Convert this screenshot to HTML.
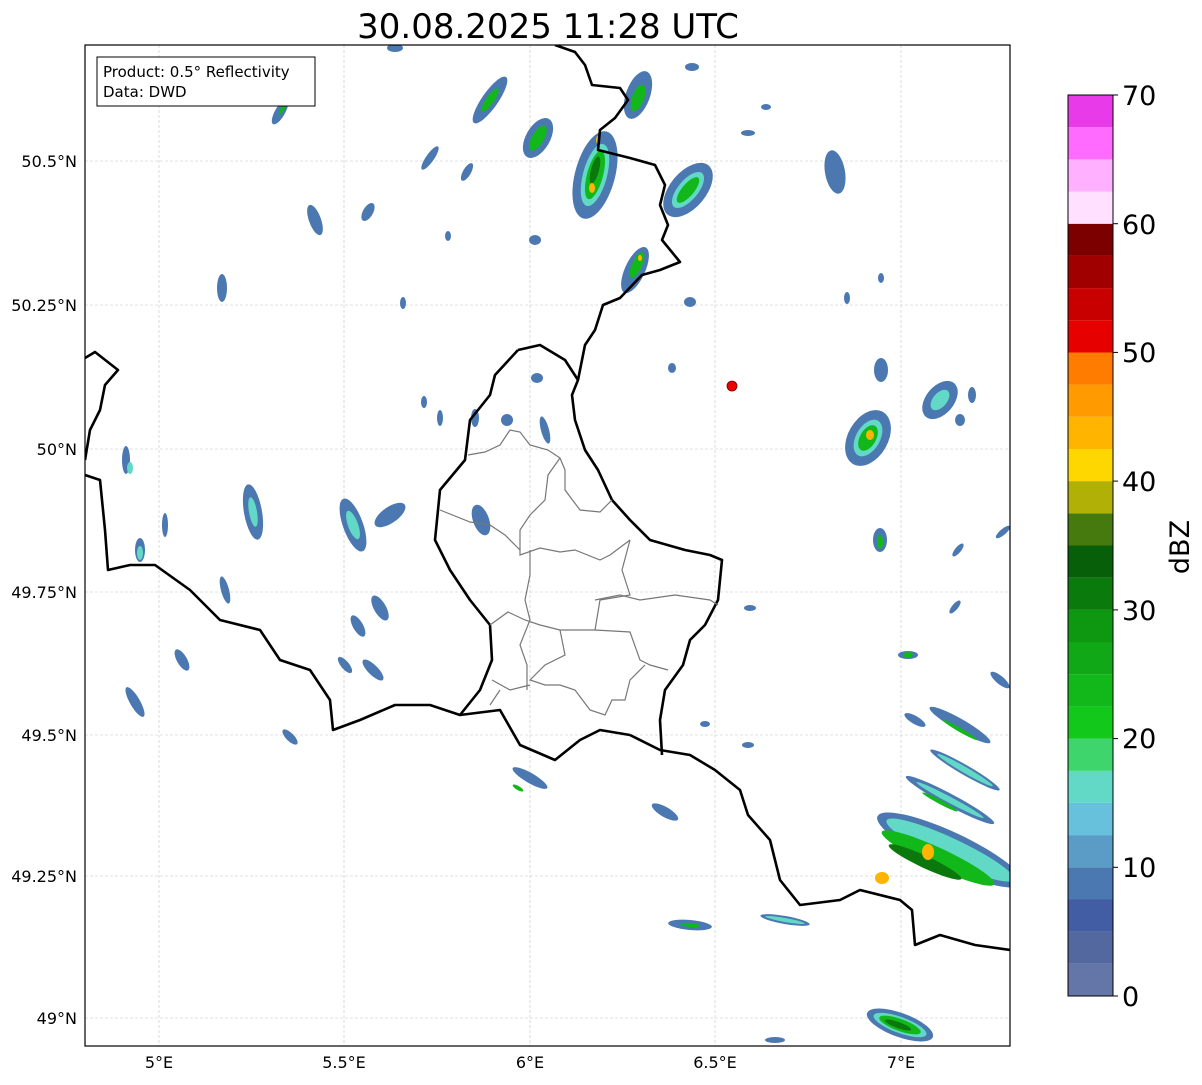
<!DOCTYPE html>
<html><head><meta charset="utf-8"><style>
body{margin:0;background:#fff;width:1202px;height:1081px;overflow:hidden;font-family:"DejaVu Sans","Liberation Sans",sans-serif}
</style></head><body>
<svg width="1202" height="1081" xmlns="http://www.w3.org/2000/svg" font-family="DejaVu Sans, Liberation Sans, sans-serif">
<text x="548" y="38" font-size="34" text-anchor="middle">30.08.2025 11:28 UTC</text>
<defs><clipPath id="c"><rect x="85" y="45" width="925" height="1001"/></clipPath></defs>
<g stroke="#c4c4c4" stroke-width="0.6" stroke-dasharray="3,2">
<line x1="159" y1="45" x2="159" y2="1046"/><line x1="344" y1="45" x2="344" y2="1046"/><line x1="530" y1="45" x2="530" y2="1046"/><line x1="715" y1="45" x2="715" y2="1046"/><line x1="901" y1="45" x2="901" y2="1046"/>
<line x1="85" y1="161" x2="1010" y2="161"/><line x1="85" y1="305" x2="1010" y2="305"/><line x1="85" y1="449" x2="1010" y2="449"/><line x1="85" y1="592" x2="1010" y2="592"/><line x1="85" y1="735" x2="1010" y2="735"/><line x1="85" y1="876" x2="1010" y2="876"/><line x1="85" y1="1018" x2="1010" y2="1018"/>
</g>
<g clip-path="url(#c)">
<g id="blobs">
<g fill="#4b78b1">
<ellipse cx="490" cy="100" rx="8" ry="28" transform="rotate(35 490 100)"/>
<ellipse cx="538" cy="138" rx="12" ry="22" transform="rotate(30 538 138)"/>
<ellipse cx="595" cy="175" rx="20" ry="45" transform="rotate(15 595 175)"/>
<ellipse cx="638" cy="95" rx="12" ry="25" transform="rotate(20 638 95)"/>
<ellipse cx="688" cy="190" rx="18" ry="32" transform="rotate(40 688 190)"/>
<ellipse cx="635" cy="270" rx="10" ry="25" transform="rotate(25 635 270)"/>
<ellipse cx="430" cy="158" rx="4" ry="14" transform="rotate(35 430 158)"/>
<ellipse cx="467" cy="172" rx="4" ry="10" transform="rotate(30 467 172)"/>
<ellipse cx="315" cy="220" rx="6" ry="16" transform="rotate(-20 315 220)"/>
<ellipse cx="368" cy="212" rx="5" ry="10" transform="rotate(30 368 212)"/>
<ellipse cx="222" cy="288" rx="5" ry="14"/>
<ellipse cx="280" cy="112" rx="5" ry="14" transform="rotate(30 280 112)"/>
<ellipse cx="692" cy="67" rx="7" ry="4"/>
<ellipse cx="835" cy="172" rx="10" ry="22" transform="rotate(-10 835 172)"/>
<ellipse cx="868" cy="438" rx="20" ry="30" transform="rotate(30 868 438)"/>
<ellipse cx="940" cy="400" rx="14" ry="22" transform="rotate(40 940 400)"/>
<ellipse cx="881" cy="370" rx="7" ry="12"/>
<ellipse cx="880" cy="540" rx="7" ry="12"/>
<ellipse cx="253" cy="512" rx="9" ry="28" transform="rotate(-10 253 512)"/>
<ellipse cx="353" cy="525" rx="10" ry="28" transform="rotate(-20 353 525)"/>
<ellipse cx="390" cy="515" rx="8" ry="18" transform="rotate(55 390 515)"/>
<ellipse cx="481" cy="520" rx="8" ry="16" transform="rotate(-20 481 520)"/>
<ellipse cx="140" cy="550" rx="5" ry="12"/>
<ellipse cx="165" cy="525" rx="3" ry="12"/>
<ellipse cx="126" cy="460" rx="4" ry="14"/>
<ellipse cx="380" cy="608" rx="6" ry="14" transform="rotate(-30 380 608)"/>
<ellipse cx="358" cy="626" rx="5" ry="12" transform="rotate(-30 358 626)"/>
<ellipse cx="373" cy="670" rx="5" ry="14" transform="rotate(-45 373 670)"/>
<ellipse cx="345" cy="665" rx="4" ry="10" transform="rotate(-40 345 665)"/>
<ellipse cx="182" cy="660" rx="5" ry="12" transform="rotate(-30 182 660)"/>
<ellipse cx="135" cy="702" rx="5" ry="17" transform="rotate(-30 135 702)"/>
<ellipse cx="225" cy="590" rx="4" ry="14" transform="rotate(-15 225 590)"/>
<ellipse cx="290" cy="737" rx="4" ry="10" transform="rotate(-45 290 737)"/>
<ellipse cx="530" cy="778" rx="5" ry="20" transform="rotate(-60 530 778)"/>
<ellipse cx="665" cy="812" rx="5" ry="15" transform="rotate(-60 665 812)"/>
<ellipse cx="690" cy="925" rx="5" ry="22" transform="rotate(-85 690 925)"/>
<ellipse cx="785" cy="920" rx="4" ry="25" transform="rotate(-80 785 920)"/>
<ellipse cx="950" cy="850" rx="18" ry="80" transform="rotate(-65 950 850)"/>
<ellipse cx="950" cy="800" rx="6" ry="50" transform="rotate(-62 950 800)"/>
<ellipse cx="965" cy="770" rx="5" ry="40" transform="rotate(-60 965 770)"/>
<ellipse cx="960" cy="725" rx="6" ry="35" transform="rotate(-60 960 725)"/>
<ellipse cx="915" cy="720" rx="4" ry="12" transform="rotate(-60 915 720)"/>
<ellipse cx="1000" cy="680" rx="4" ry="12" transform="rotate(-50 1000 680)"/>
<ellipse cx="900" cy="1025" rx="12" ry="35" transform="rotate(-70 900 1025)"/>
<ellipse cx="955" cy="607" rx="3" ry="8" transform="rotate(40 955 607)"/>
<ellipse cx="958" cy="550" rx="3" ry="8" transform="rotate(40 958 550)"/>
<ellipse cx="1003" cy="532" rx="3" ry="9" transform="rotate(50 1003 532)"/>
<ellipse cx="908" cy="655" rx="10" ry="4"/>
<ellipse cx="545" cy="430" rx="4" ry="14" transform="rotate(-15 545 430)"/>
<ellipse cx="537" cy="378" rx="6" ry="5"/>
<ellipse cx="507" cy="420" rx="6" ry="6"/>
<ellipse cx="475" cy="418" rx="4" ry="9"/>
<ellipse cx="440" cy="418" rx="3" ry="8"/>
<ellipse cx="424" cy="402" rx="3" ry="6"/>
<ellipse cx="847" cy="298" rx="3" ry="6"/>
<ellipse cx="403" cy="303" rx="3" ry="6"/>
<ellipse cx="535" cy="240" rx="6" ry="5"/>
<ellipse cx="448" cy="236" rx="3" ry="5"/>
<ellipse cx="690" cy="302" rx="6" ry="5"/>
<ellipse cx="748" cy="133" rx="7" ry="3"/>
<ellipse cx="766" cy="107" rx="5" ry="3"/>
<ellipse cx="750" cy="608" rx="6" ry="3"/>
<ellipse cx="705" cy="724" rx="5" ry="3"/>
<ellipse cx="748" cy="745" rx="6" ry="3"/>
<ellipse cx="881" cy="278" rx="3" ry="5"/>
<ellipse cx="672" cy="368" rx="4" ry="5"/>
<ellipse cx="960" cy="420" rx="5" ry="6"/>
<ellipse cx="972" cy="395" rx="4" ry="8"/>
<ellipse cx="395" cy="48" rx="8" ry="4"/>
<ellipse cx="775" cy="1040" rx="10" ry="3"/>
</g>
<g fill="#62d8c6">
<ellipse cx="595" cy="175" rx="12" ry="32" transform="rotate(15 595 175)"/>
<ellipse cx="688" cy="190" rx="10" ry="22" transform="rotate(40 688 190)"/>
<ellipse cx="868" cy="438" rx="12" ry="20" transform="rotate(30 868 438)"/>
<ellipse cx="940" cy="400" rx="7" ry="12" transform="rotate(40 940 400)"/>
<ellipse cx="950" cy="850" rx="12" ry="70" transform="rotate(-65 950 850)"/>
<ellipse cx="353" cy="525" rx="5" ry="15" transform="rotate(-20 353 525)"/>
<ellipse cx="253" cy="512" rx="4" ry="15" transform="rotate(-10 253 512)"/>
<ellipse cx="965" cy="770" rx="3" ry="32" transform="rotate(-60 965 770)"/>
<ellipse cx="950" cy="800" rx="3" ry="38" transform="rotate(-62 950 800)"/>
<ellipse cx="900" cy="1025" rx="8" ry="28" transform="rotate(-70 900 1025)"/>
<ellipse cx="785" cy="920" rx="2" ry="20" transform="rotate(-80 785 920)"/>
<ellipse cx="130" cy="468" rx="3" ry="6"/>
<ellipse cx="140" cy="553" rx="3" ry="7"/>
</g>
<g fill="#12b81a">
<ellipse cx="595" cy="175" rx="8" ry="25" transform="rotate(15 595 175)"/>
<ellipse cx="538" cy="138" rx="6" ry="14" transform="rotate(30 538 138)"/>
<ellipse cx="638" cy="98" rx="6" ry="14" transform="rotate(20 638 98)"/>
<ellipse cx="688" cy="190" rx="6" ry="16" transform="rotate(40 688 190)"/>
<ellipse cx="637" cy="265" rx="5" ry="14" transform="rotate(25 637 265)"/>
<ellipse cx="490" cy="100" rx="4" ry="14" transform="rotate(35 490 100)"/>
<ellipse cx="868" cy="438" rx="8" ry="14" transform="rotate(30 868 438)"/>
<ellipse cx="938" cy="858" rx="10" ry="62" transform="rotate(-65 938 858)"/>
<ellipse cx="900" cy="1025" rx="6" ry="22" transform="rotate(-70 900 1025)"/>
<ellipse cx="880" cy="542" rx="3" ry="7"/>
<ellipse cx="960" cy="730" rx="2" ry="20" transform="rotate(-60 960 730)"/>
<ellipse cx="940" cy="802" rx="2" ry="20" transform="rotate(-62 940 802)"/>
<ellipse cx="690" cy="925" rx="2" ry="10" transform="rotate(-85 690 925)"/>
<ellipse cx="518" cy="788" rx="2" ry="6" transform="rotate(-60 518 788)"/>
<ellipse cx="908" cy="655" rx="5" ry="3"/>
<ellipse cx="283" cy="108" rx="2" ry="8" transform="rotate(30 283 108)"/>
</g>
<g fill="#0a780c">
<ellipse cx="595" cy="170" rx="4" ry="14" transform="rotate(15 595 170)"/>
<ellipse cx="925" cy="862" rx="6" ry="40" transform="rotate(-65 925 862)"/>
<ellipse cx="898" cy="1025" rx="3" ry="14" transform="rotate(-70 898 1025)"/>
</g>
<g fill="#ffb400">
<ellipse cx="928" cy="852" rx="6" ry="8"/>
<ellipse cx="882" cy="878" rx="7" ry="6"/>
<ellipse cx="870" cy="435" rx="4" ry="5"/>
<ellipse cx="592" cy="188" rx="3" ry="5"/>
<ellipse cx="598" cy="140" rx="2" ry="4"/>
<ellipse cx="640" cy="258" rx="2" ry="3"/>
</g>
</g>
<g fill="none" stroke="#000" stroke-width="2.6" stroke-linejoin="round">
<polyline points="555,45 575,52 585,65 592,85 620,88 628,100 615,118 600,130 598,150 630,158 655,165 665,185 660,205 668,225 662,240 680,262 660,270 642,275 620,298 603,305 595,330 585,345 578,380 572,395 575,420 585,450 598,470 612,500 630,520 650,540 685,550 710,555 722,560 718,600 705,625 690,640 683,665 665,690 660,720 662,755"/>
<polyline points="630,735 660,750 690,755 715,770 740,790 748,815 770,840 780,880 800,905 840,900 860,890 900,900 912,910 915,945 940,935 975,945 1010,950"/>
<polyline points="518,350 540,345 565,360 578,380"/>
<polyline points="518,350 495,375 490,395 470,420 465,460 440,490 435,540 450,570 470,600 490,625 492,660 480,690 460,715 500,710 520,745 555,760 580,740 600,730 630,735"/>
<polyline points="85,475 100,480 105,530 108,570 130,565 155,565 190,590 220,620 260,630 280,660 310,670 330,700 333,730 360,720 395,705 430,705 460,715"/>
<polyline points="85,358 95,352 118,370 105,385 100,410 90,430 85,460"/>
</g>
<g fill="none" stroke="#777" stroke-width="1.2">
<polyline points="468,455 485,452 500,445 510,430 520,432 530,445 548,450 560,458"/>
<polyline points="560,458 565,470 565,490 580,510 600,512 612,500"/>
<polyline points="560,458 548,475 545,500 530,515 520,530 520,555 540,548 560,552 575,550 600,560 610,555 630,540"/>
<polyline points="440,510 470,522 490,525 505,535 520,550"/>
<polyline points="530,550 530,575 525,600 530,620 520,645 527,665 527,690"/>
<polyline points="630,540 622,570 630,595 600,600 595,630 560,630 540,625 525,620 508,612 490,625"/>
<polyline points="595,600 620,595 640,600 675,595 710,600 718,605"/>
<polyline points="595,630 630,632 640,660 650,665 668,670"/>
<polyline points="560,630 565,655 545,665 530,680 545,685 560,685 575,690 590,710 605,715 612,700 625,700 630,680 645,665"/>
<polyline points="492,680 510,690 530,685"/>
<polyline points="490,705 500,690"/>
</g>
<circle cx="732" cy="386" r="5" fill="#e00" stroke="#600" stroke-width="0.8"/>
</g>
<rect x="85" y="45" width="925" height="1001" fill="none" stroke="#000" stroke-width="1.2"/>
<rect x="97" y="57" width="218" height="49" fill="#fff" stroke="#000" stroke-width="1"/>
<text x="103" y="77" font-size="15">Product: 0.5° Reflectivity</text>
<text x="103" y="97" font-size="15">Data: DWD</text>
<g font-size="16" text-anchor="end">
<text x="77" y="167">50.5°N</text><text x="77" y="311">50.25°N</text><text x="77" y="455">50°N</text><text x="77" y="598">49.75°N</text><text x="77" y="741">49.5°N</text><text x="77" y="882">49.25°N</text><text x="77" y="1024">49°N</text>
</g>
<g font-size="16" text-anchor="middle">
<text x="159" y="1068">5°E</text><text x="344" y="1068">5.5°E</text><text x="530" y="1068">6°E</text><text x="715" y="1068">6.5°E</text><text x="901" y="1068">7°E</text>
</g>
<g>
<rect x="1068" y="963.8" width="45" height="32.2" fill="#6475a8"/>
<rect x="1068" y="931.6" width="45" height="32.2" fill="#5468a0"/>
<rect x="1068" y="899.4" width="45" height="32.2" fill="#425da3"/>
<rect x="1068" y="867.3" width="45" height="32.2" fill="#4b78b1"/>
<rect x="1068" y="835.1" width="45" height="32.2" fill="#5b9cc6"/>
<rect x="1068" y="802.9" width="45" height="32.2" fill="#68c1dc"/>
<rect x="1068" y="770.7" width="45" height="32.2" fill="#62d8c6"/>
<rect x="1068" y="738.6" width="45" height="32.2" fill="#3ed66c"/>
<rect x="1068" y="706.4" width="45" height="32.2" fill="#12c81a"/>
<rect x="1068" y="674.2" width="45" height="32.2" fill="#12b81a"/>
<rect x="1068" y="642" width="45" height="32.2" fill="#10a816"/>
<rect x="1068" y="609.9" width="45" height="32.2" fill="#0e9812"/>
<rect x="1068" y="577.7" width="45" height="32.2" fill="#0a7a0c"/>
<rect x="1068" y="545.5" width="45" height="32.2" fill="#085f0a"/>
<rect x="1068" y="513.3" width="45" height="32.2" fill="#467a0e"/>
<rect x="1068" y="481.1" width="45" height="32.2" fill="#b0b006"/>
<rect x="1068" y="449" width="45" height="32.2" fill="#ffd700"/>
<rect x="1068" y="416.8" width="45" height="32.2" fill="#ffb400"/>
<rect x="1068" y="384.6" width="45" height="32.2" fill="#ff9a00"/>
<rect x="1068" y="352.4" width="45" height="32.2" fill="#ff7c00"/>
<rect x="1068" y="320.3" width="45" height="32.2" fill="#e60000"/>
<rect x="1068" y="288.1" width="45" height="32.2" fill="#c80000"/>
<rect x="1068" y="255.9" width="45" height="32.2" fill="#a00000"/>
<rect x="1068" y="223.7" width="45" height="32.2" fill="#7c0000"/>
<rect x="1068" y="191.6" width="45" height="32.2" fill="#ffe0ff"/>
<rect x="1068" y="159.4" width="45" height="32.2" fill="#ffb0ff"/>
<rect x="1068" y="127.2" width="45" height="32.2" fill="#ff6aff"/>
<rect x="1068" y="95" width="45" height="32.2" fill="#e83ae8"/>
<rect x="1068" y="95" width="45" height="901" fill="none" stroke="#000" stroke-width="1"/>
</g>
<g stroke="#000" stroke-width="1">
<line x1="1113" y1="996" x2="1118" y2="996"/><line x1="1113" y1="867.3" x2="1118" y2="867.3"/><line x1="1113" y1="738.6" x2="1118" y2="738.6"/><line x1="1113" y1="609.9" x2="1118" y2="609.9"/><line x1="1113" y1="481.1" x2="1118" y2="481.1"/><line x1="1113" y1="352.4" x2="1118" y2="352.4"/><line x1="1113" y1="223.7" x2="1118" y2="223.7"/><line x1="1113" y1="95" x2="1118" y2="95"/>
</g>
<g font-size="27">
<text x="1122" y="1006">0</text><text x="1122" y="877">10</text><text x="1122" y="748">20</text><text x="1122" y="620">30</text><text x="1122" y="491">40</text><text x="1122" y="362">50</text><text x="1122" y="234">60</text><text x="1122" y="105">70</text>
</g>
<text x="1189" y="547" font-size="27" text-anchor="middle" transform="rotate(-90 1189 547)">dBZ</text>
</svg>
</body></html>
